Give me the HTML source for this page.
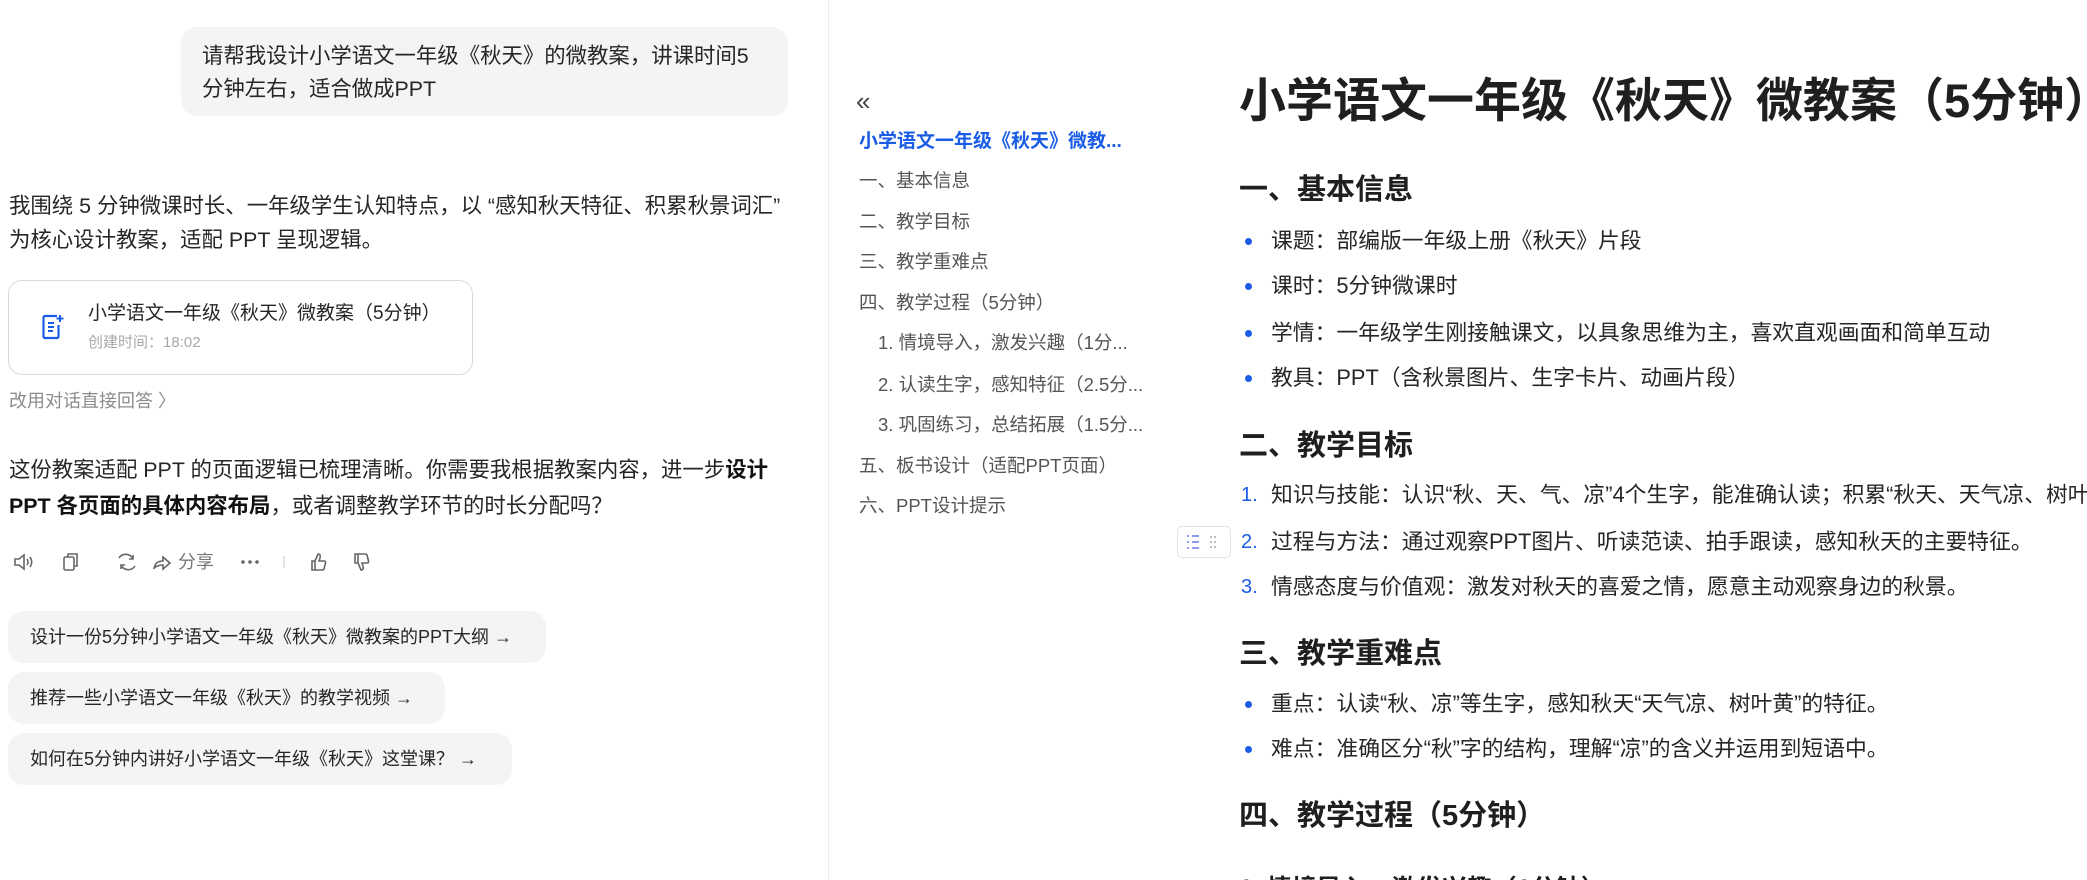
<!DOCTYPE html>
<html><head><meta charset="utf-8"><style>
*{margin:0;padding:0;box-sizing:border-box}
html,body{width:2087px;height:880px;overflow:hidden}
body{background:#fff;font-family:"Liberation Sans","Noto Sans CJK SC",sans-serif;color:#222;position:relative}
#w{position:absolute;left:0;top:0;width:2087px;height:880px;overflow:hidden}
.a{position:absolute;white-space:nowrap}
.t{line-height:34px;font-size:21.4px;color:#262626}
.bub{left:181px;top:27px;width:607px;height:89px;background:#f4f4f4;border-radius:16px}
.card{left:8px;top:280px;width:465px;height:95px;border:1px solid #d9d9d9;border-radius:14px}
.chip{left:8px;height:52px;background:#f4f4f4;border-radius:16px;font-size:18px;line-height:52px;padding-left:22px;color:#262626}
.toc{font-size:18.5px;color:#555;line-height:30px;left:859px}
.h2{font-size:29px;font-weight:bold;left:1239px;color:#1f1f1f;line-height:40px}
.li{font-size:21.8px;left:1271px;color:#262626;line-height:34px}
.dot{position:absolute;left:1245px;width:7px;height:7px;border-radius:50%;background:#1a5ce6}
.num{font-size:20px;left:1241px;color:#1a5ce6;line-height:34px}
</style></head><body><div id="w">
<div class="a" style="left:828px;top:0;width:1px;height:880px;background:#ededed"></div>

<div class="a bub"></div>
<div class="a t" style="left:202px;top:39px">请帮我设计小学语文一年级《秋天》的微教案，讲课时间5</div>
<div class="a t" style="left:202px;top:72px">分钟左右，适合做成PPT</div>

<div class="a t" style="left:9px;top:189px">我围绕 5 分钟微课时长、一年级学生认知特点，以 “感知秋天特征、积累秋景词汇”</div>
<div class="a t" style="left:9px;top:223px">为核心设计教案，适配 PPT 呈现逻辑。</div>

<div class="a card"></div>
<svg class="a" style="left:40px;top:313px" width="26" height="28" viewBox="0 0 26 28"><path d="M17 3H5a1.5 1.5 0 0 0-1.5 1.5v19A1.5 1.5 0 0 0 5 25h12a1.5 1.5 0 0 0 1.5-1.5V12" fill="none" stroke="#1a5ce6" stroke-width="2.2"/><path d="M8 10h6M8 14h6M8 18h5" stroke="#1a5ce6" stroke-width="2"/><path d="M20 2v7M16.5 5.5h7" stroke="#1a5ce6" stroke-width="2"/></svg>
<div class="a" style="left:88px;top:300px;font-size:19px;line-height:28px;color:#262626">小学语文一年级《秋天》微教案（5分钟）</div>
<div class="a" style="left:88px;top:332px;font-size:15px;line-height:22px;color:#a8a8a8">创建时间：18:02</div>

<div class="a" style="left:9px;top:388px;font-size:18px;line-height:26px;color:#8c8c8c">改用对话直接回答 〉</div>

<div class="a t" style="left:9px;top:453px">这份教案适配 PPT 的页面逻辑已梳理清晰。你需要我根据教案内容，进一步<b style="color:#111">设计</b></div>
<div class="a t" style="left:9px;top:489px"><b style="color:#111">PPT 各页面的具体内容布局</b>，或者调整教学环节的时长分配吗？</div>

<svg class="a" style="left:12px;top:550px" width="380" height="24" viewBox="0 0 380 24" fill="none" stroke="#666" stroke-width="1.6">
<path d="M3 9h4l5-4v14l-5-4H3z"/><path d="M15 9q2 3 0 6M18 7q3.5 5 0 10"/>
<rect x="52" y="7" width="10" height="13" rx="1.5"/><path d="M56 7V4h9v12h-3"/>
<path d="M107 8a8 8 0 0 1 14 1M123 16a8 8 0 0 1-14-1"/><path d="M121 5v4h-4M109 19v-4h4"/>
<path d="M142 19q1-8 9-8V7l7 6-7 6v-4q-5 0-9 3z"/>
<circle cx="231" cy="12" r="1" fill="#666"/><circle cx="238" cy="12" r="1" fill="#666"/><circle cx="245" cy="12" r="1" fill="#666"/>
<path d="M272 6v12" stroke="#ddd"/>
<path d="M300 11h3v9h-3zM303 11l3-7q3 0 2 4l-1 3h5q2 0 1.5 2l-1.5 6q-.5 1-2 1h-7"/>
<path d="M343 13h3V4h-3zM346 13l3 7q3 0 2-4l-1-3h5q2 0 1.5-2l-1.5-6q-.5-1-2-1h-7"/>
</svg>
<div class="a" style="left:178px;top:549px;font-size:18px;line-height:26px;color:#777">分享</div>

<div class="a chip" style="top:611px;width:538px">设计一份5分钟小学语文一年级《秋天》微教案的PPT大纲 →</div>
<div class="a chip" style="top:672px;width:437px">推荐一些小学语文一年级《秋天》的教学视频 →</div>
<div class="a chip" style="top:733px;width:504px">如何在5分钟内讲好小学语文一年级《秋天》这堂课？ →</div>

<div class="a" style="left:856px;top:86px;font-size:26px;line-height:30px;color:#444">«</div>
<div class="a" style="left:859px;top:127px;font-size:19px;line-height:30px;font-weight:bold;color:#1a5ce6">小学语文一年级《秋天》微教...</div>
<div class="a toc" style="top:166px">一、基本信息</div>
<div class="a toc" style="top:207px">二、教学目标</div>
<div class="a toc" style="top:247px">三、教学重难点</div>
<div class="a toc" style="top:288px">四、教学过程（5分钟）</div>
<div class="a toc" style="left:878px;top:328px">1. 情境导入，激发兴趣（1分...</div>
<div class="a toc" style="left:878px;top:370px">2. 认读生字，感知特征（2.5分...</div>
<div class="a toc" style="left:878px;top:410px">3. 巩固练习，总结拓展（1.5分...</div>
<div class="a toc" style="top:451px">五、板书设计（适配PPT页面）</div>
<div class="a toc" style="top:491px">六、PPT设计提示</div>

<div class="a" style="left:1239px;top:72px;width:848px;overflow:hidden;font-size:47px;font-weight:bold;line-height:58px;color:#1f1f1f">小学语文一年级《秋天》微教案（5分钟）</div>

<div class="a h2" style="top:170px">一、基本信息</div>
<div class="dot" style="top:238px"></div><div class="a li" style="top:224px">课题：部编版一年级上册《秋天》片段</div>
<div class="dot" style="top:283px"></div><div class="a li" style="top:269px">课时：5分钟微课时</div>
<div class="dot" style="top:330px"></div><div class="a li" style="top:316px">学情：一年级学生刚接触课文，以具象思维为主，喜欢直观画面和简单互动</div>
<div class="dot" style="top:375px"></div><div class="a li" style="top:361px">教具：PPT（含秋景图片、生字卡片、动画片段）</div>

<div class="a h2" style="top:426px">二、教学目标</div>
<div class="a num" style="top:478px">1.</div><div class="a li" style="top:478px;width:816px;overflow:hidden">知识与技能：认识“秋、天、气、凉”4个生字，能准确认读；积累“秋天、天气凉、树叶黄”等词语。</div>
<div class="a" style="left:1177px;top:526px;width:54px;height:32px;border:1px solid #e3e3e3;border-radius:5px;background:#fff"></div>
<svg class="a" style="left:1185px;top:532px" width="40" height="20" viewBox="0 0 40 20"><path d="M2 4h2M2 10h2M2 16h2" stroke="#6b7cf0" stroke-width="1.5"/><path d="M7 4h7M7 10h7M7 16h7" stroke="#6b7cf0" stroke-width="1.5"/><g fill="#aaa"><circle cx="26" cy="5" r="1"/><circle cx="30" cy="5" r="1"/><circle cx="26" cy="10" r="1"/><circle cx="30" cy="10" r="1"/><circle cx="26" cy="15" r="1"/><circle cx="30" cy="15" r="1"/></g></svg>
<div class="a num" style="top:525px">2.</div><div class="a li" style="top:525px">过程与方法：通过观察PPT图片、听读范读、拍手跟读，感知秋天的主要特征。</div>
<div class="a num" style="top:570px">3.</div><div class="a li" style="top:570px">情感态度与价值观：激发对秋天的喜爱之情，愿意主动观察身边的秋景。</div>

<div class="a h2" style="top:634px">三、教学重难点</div>
<div class="dot" style="top:701px"></div><div class="a li" style="top:687px">重点：认读“秋、凉”等生字，感知秋天“天气凉、树叶黄”的特征。</div>
<div class="dot" style="top:746px"></div><div class="a li" style="top:732px">难点：准确区分“秋”字的结构，理解“凉”的含义并运用到短语中。</div>

<div class="a h2" style="top:796px">四、教学过程（5分钟）</div>
<div class="a" style="left:1239px;top:864px;height:16px;overflow:hidden;font-size:25px;font-weight:bold;line-height:34px;color:#1f1f1f"><div style="margin-top:8px;line-height:34px">1. 情境导入，激发兴趣（1分钟）</div></div>
</div></body></html>
